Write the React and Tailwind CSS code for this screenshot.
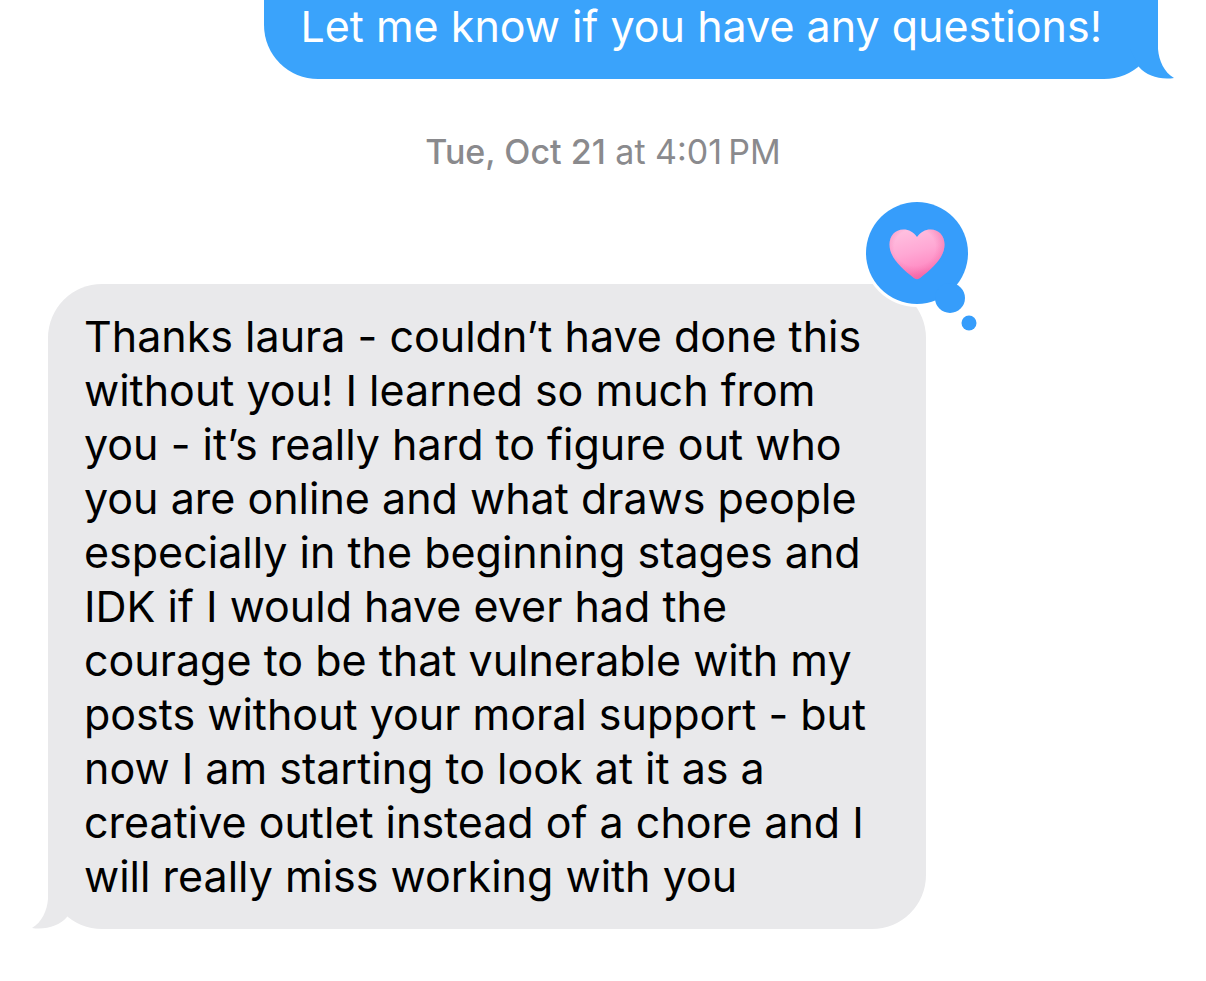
const lines = [
  "Thanks laura - couldn’t have done this",
  "without you! I learned so much from",
  "you - it’s really hard to figure out who",
  "you are online and what draws people",
  "especially in the beginning stages and",
  "IDK if I would have ever had the",
  "courage to be that vulnerable with my",
  "posts without your moral support - but",
  "now I am starting to look at it as a",
  "creative outlet instead of a chore and I",
  "will really miss working with you",
];

function Tail({ className }) {
  return (
    <svg
      className={className}
      width="46"
      height="60"
      viewBox="0 0 46 60"
      fill="currentColor"
      aria-hidden="true"
    >
      <path d="M30 0V30C31 42 36 53 46 59C32 61 19 57 11 48L2 30Z" />
    </svg>
  );
}

function HeartReaction() {
  return (
    <svg
      className="absolute -top-[85px] -right-[54px]"
      width="118"
      height="134"
      viewBox="0 0 118 134"
      role="img"
      aria-label="Loved"
    >
      <defs>
        <linearGradient id="heartBase" x1="0.3" y1="0" x2="0.6" y2="1">
          <stop offset="0" stopColor="#ffc0e0" />
          <stop offset="0.45" stopColor="#ffa8d4" />
          <stop offset="0.8" stopColor="#ff8cc4" />
          <stop offset="1" stopColor="#fb6aae" />
        </linearGradient>
        <radialGradient id="heartRim" cx="0.46" cy="0.36" r="0.62">
          <stop offset="0.6" stopColor="#f0609f" stopOpacity="0" />
          <stop offset="1" stopColor="#f0609f" stopOpacity="0.6" />
        </radialGradient>
        <path
          id="heartShape"
          d="M55 38C51.500 33 47 30.500 41.500 30.500C33 30.500 27.500 37 27.500 45.500C27.500 58 38.500 68.500 52 79C54 80.500 56 80.500 58 79C71.500 68.500 82.500 58 82.500 45.500C82.500 37 77 30.500 68.500 30.500C63 30.500 58.500 33 55 38Z"
        />
      </defs>
      <g fill="#fff">
        <circle cx="55" cy="54" r="54" />
        <circle cx="88" cy="99" r="18" />
        <circle cx="107" cy="124" r="10" />
      </g>
      <g fill="#369dfb">
        <circle cx="55" cy="54" r="51" />
        <circle cx="88" cy="99" r="15" />
        <circle cx="107" cy="124" r="7.500" />
      </g>
      <use href="#heartShape" fill="url(#heartBase)" />
      <use href="#heartShape" fill="url(#heartRim)" />
    </svg>
  );
}

export default function App() {
  return (
    <main className="min-h-screen overflow-hidden bg-white pr-12 pb-12 pl-12 font-['Inter',sans-serif] text-[43px]">
      <div className="flex justify-end">
        <div className="relative rounded-b-[54px] bg-[#3aa3fb] pr-14 pb-[27px] pl-9 leading-[52px] text-white">
          <p>Let me know if you have any questions!</p>
          <Tail className="absolute -right-4 bottom-0 text-[#3aa3fb]" />
        </div>
      </div>

      <p className="mt-[53px] text-center text-[34px] leading-10 text-[#8a8a8d]">
        <span className="font-medium">Tue, Oct 21</span> at 4:01{"\u2009"}PM
      </p>

      <div className="mt-28 flex">
        <div className="relative rounded-[54px] bg-[#e9e9eb] pt-[25px] pr-[60px] pb-[26px] pl-9 leading-[54px] text-black">
          <Tail className="absolute bottom-0 -left-4 -scale-x-100 text-[#e9e9eb]" />
          <p>
            {lines.map((line) => (
              <span key={line} className="block whitespace-nowrap">
                {line}{" "}
              </span>
            ))}
          </p>
          <HeartReaction />
        </div>
      </div>
    </main>
  );
}
